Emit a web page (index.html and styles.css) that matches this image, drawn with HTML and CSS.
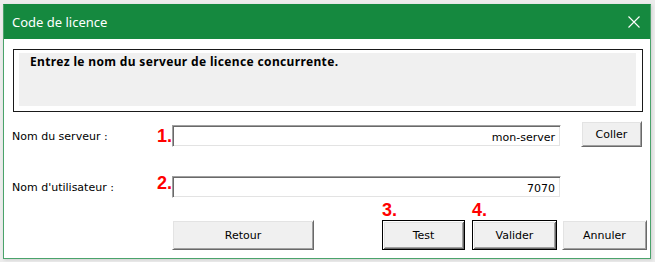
FILE: index.html
```html
<!DOCTYPE html>
<html lang="fr">
<head>
<meta charset="utf-8">
<title>Code de licence</title>
<link rel="stylesheet" href="styles.css">
</head>
<body>
<div class="window">
  <div class="titlebar">
    <span class="title">Code de licence</span>
    <svg class="close" width="12" height="12" viewBox="0 0 12 12"><path d="M0.5 0.5 L11.5 11.5 M11.5 0.5 L0.5 11.5" stroke="#fff" stroke-width="1.1" fill="none"/></svg>
  </div>
  <div class="body">
    <div class="msgbox">
      <div class="msgpanel">Entrez le nom du serveur de licence concurrente.</div>
    </div>
    <div class="row row-server">
      <span class="label">Nom du serveur :</span>
      <span class="mark mark-1">1.</span>
      <div class="field">mon-server</div>
      <button class="btn btn-coller">Coller</button>
    </div>
    <div class="row row-user">
      <span class="label">Nom d'utilisateur :</span>
      <span class="mark mark-2">2.</span>
      <div class="field">7070</div>
    </div>
    <div class="row actions">
      <button class="btn btn-retour">Retour</button>
      <div class="stack stack-test">
        <span class="mark">3.</span>
        <button class="btn default btn-test">Test</button>
      </div>
      <div class="stack stack-valider">
        <span class="mark">4.</span>
        <button class="btn default btn-valider">Valider</button>
      </div>
      <button class="btn btn-annuler">Annuler</button>
    </div>
  </div>
</div>
</body>
</html>
```
FILE: styles.css
```css
html, body {
  margin: 0;
  padding: 0;
  background: #ececec;
}
body {
  width: 655px;
  height: 262px;
  overflow: hidden;
  padding-top: 4px;
  padding-left: 3px;
  box-sizing: border-box;
}
.window {
  box-sizing: border-box;
  width: 648px;
  height: 255px;
  background: #fff;
  border: 1px solid #4aa36b;
  border-top-color: #15893f;
  display: flex;
  flex-direction: column;
  box-shadow: 1px 1px 3px rgba(0,0,0,0.12);
}
.titlebar {
  height: 34px;
  flex: none;
  background: #15893f;
  display: flex;
  align-items: center;
  justify-content: space-between;
  padding: 0 10px 0 8px;
}
.title {
  font-family: "Noto Sans", sans-serif;
  font-size: 13px;
  line-height: 34px;
  color: #fff;
}
.close {
  display: block;
  margin-top: -1px;
}
.body {
  flex: 1;
  display: flex;
  flex-direction: column;
  font-family: "DejaVu Sans", sans-serif;
  font-size: 11px;
  color: #000;
}
.msgbox {
  box-sizing: border-box;
  margin: 10px 0 0 9px;
  width: 630px;
  height: 63px;
  border: 1px solid #1a1a1a;
  padding: 3px 6px 5px 5px;
}
.msgpanel {
  height: 100%;
  background: #f0f0f0;
  box-sizing: border-box;
  padding: 1px 0 0 11px;
  font-family: "Noto Sans", sans-serif;
  font-weight: 700;
  font-size: 12px;
  letter-spacing: 0.35px;
  line-height: 16px;
}
.row {
  display: flex;
  align-items: flex-end;
  padding-left: 8px;
}
.row-server {
  margin-top: 9px;
  height: 26px;
}
.row-user {
  margin-top: 29px;
  height: 22px;
}
.label {
  width: 145px;
  flex: none;
  line-height: 22px;
  height: 22px;
  padding-top: 1px;
  box-sizing: border-box;
}
.mark {
  font-family: "Liberation Sans", Arial, sans-serif;
  font-size: 18px;
  font-weight: 700;
  color: #ff0000;
  line-height: 22px;
  width: 15px;
  flex: none;
}
.mark-2 {
  margin-bottom: 4px;
}
.field {
  box-sizing: border-box;
  width: 389px;
  height: 22px;
  flex: none;
  border: 1px solid;
  border-color: #a0a0a0 #fff #fff #a0a0a0;
  box-shadow: inset 1px 1px #696969, inset -1px -1px #e3e3e3;
  display: flex;
  align-items: center;
  justify-content: flex-end;
  padding-right: 5px;
  padding-top: 2px;
}
.btn {
  box-sizing: border-box;
  margin: 0;
  padding: 0;
  background: #f0f0f0;
  border: 1px solid;
  border-color: #fff #696969 #696969 #fff;
  box-shadow: inset 1px 1px #e3e3e3, inset -1px -1px #a0a0a0;
  font-family: "DejaVu Sans", sans-serif;
  font-size: 11px;
  color: #000;
  flex: none;
}
.btn.default {
  border-color: #000;
  box-shadow: inset 1px 1px #fff, inset -1px -1px #696969, inset 2px 2px #e3e3e3, inset -2px -2px #a0a0a0;
}
.btn-coller {
  width: 61px;
  height: 26px;
  margin-left: 20px;
}
.actions {
  margin-top: 3px;
  padding-left: 168px;
}
.btn-retour {
  width: 142px;
  height: 30px;
}
.stack {
  display: flex;
  flex-direction: column;
}
.stack .mark {
  line-height: 18px;
  height: 18px;
  margin-bottom: 1px;
}
.stack-test {
  margin-left: 68px;
}
.stack-valider {
  margin-left: 7px;
}
.btn-test {
  width: 83px;
  height: 30px;
}
.btn-valider {
  width: 85px;
  height: 30px;
}
.btn-annuler {
  width: 85px;
  height: 30px;
  margin-left: 5px;
}
```
